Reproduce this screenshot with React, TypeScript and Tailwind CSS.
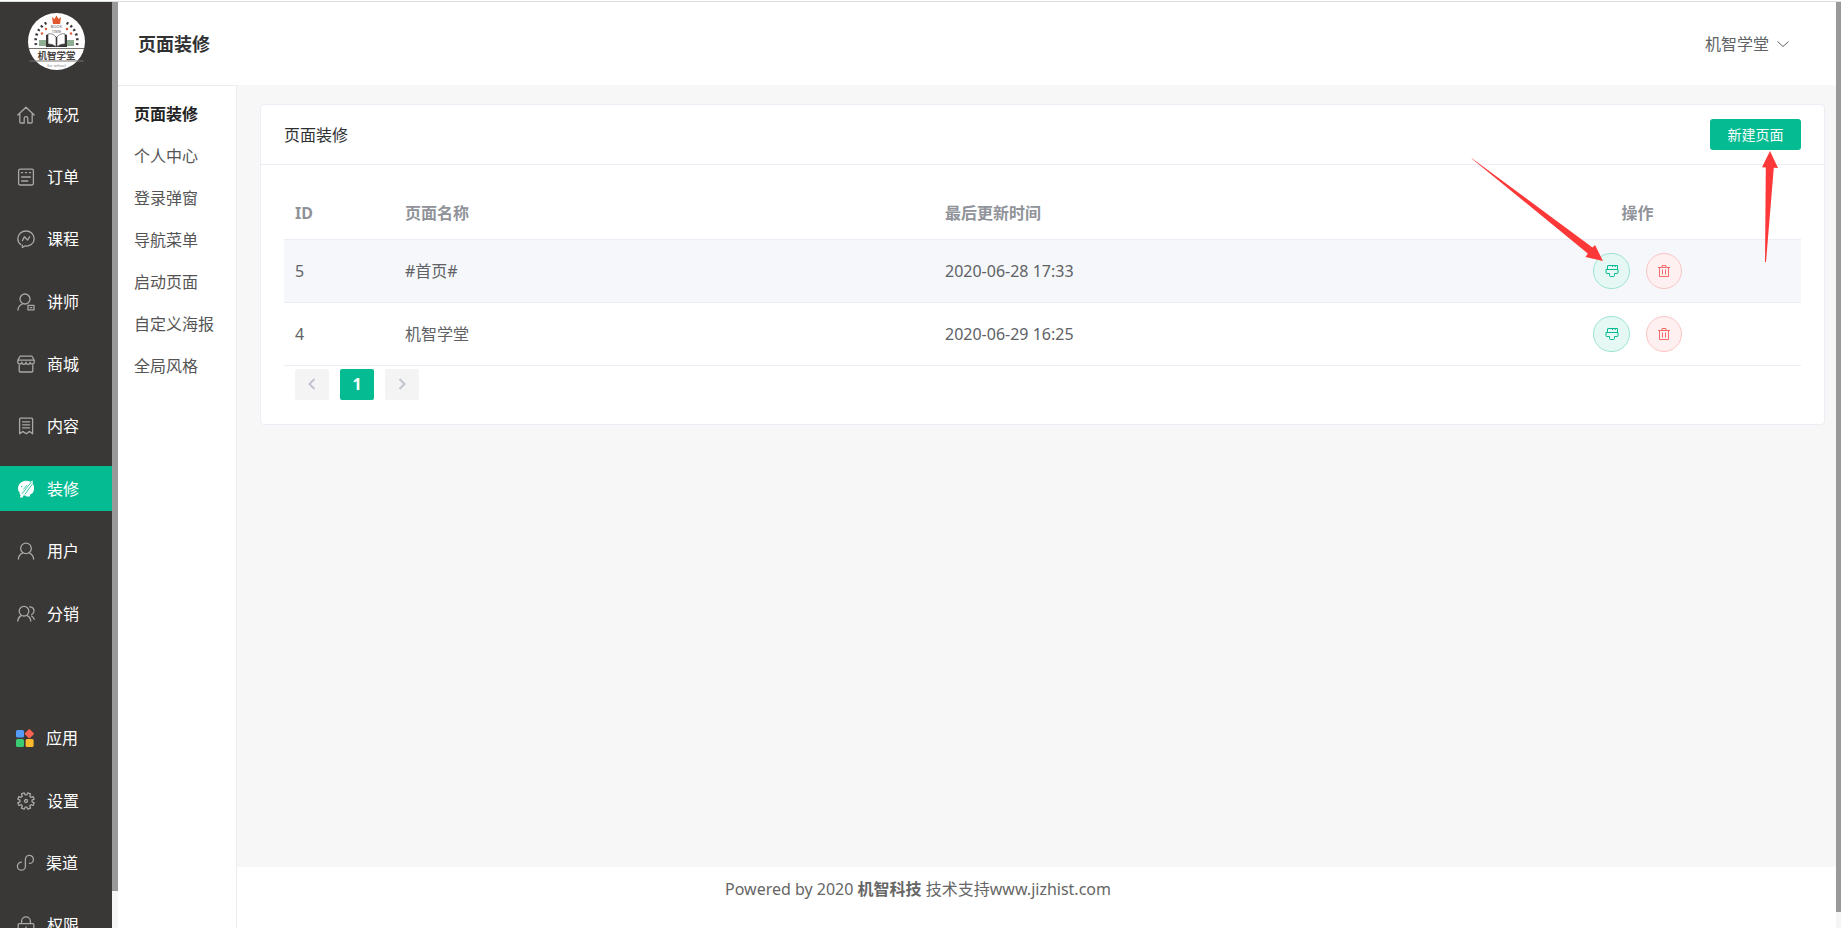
import { type ReactNode } from "react";
import clsx from "clsx";

interface MenuItem {
  label: string;
  icon: ReactNode;
  active?: boolean;
  tight?: boolean;
}

interface PageRow {
  id: number;
  name: string;
  updatedAt: string;
}

const LineIcon = ({ children }: { children: ReactNode }) => (
  <svg
    viewBox="0 0 18 18"
    className="size-[18px] shrink-0"
    fill="none"
    stroke="currentColor"
    strokeWidth="1.3"
    strokeLinecap="round"
    strokeLinejoin="round"
    aria-hidden="true"
  >
    {children}
  </svg>
);

// eight teeth, four outline points for each
const GEAR_POINTS = Array.from({ length: 8 }, (_, tooth) =>
  [
    [-15, 6.1],
    [-10, 8.4],
    [10, 8.4],
    [15, 6.1],
  ].map(([offset, radius]) => {
    const angle = ((22.5 + tooth * 45 + offset) * Math.PI) / 180;
    return `${(9 + radius * Math.cos(angle)).toFixed(2)},${(9 + radius * Math.sin(angle)).toFixed(2)}`;
  }),
)
  .flat()
  .join(" ");

const MENU: (MenuItem | null)[] = [
  {
    label: "概况",
    icon: (
      <LineIcon>
        <path d="M.8 9 9 1.2 17.2 9M2.8 7.5V16a1 1 0 0 0 1 1h3.4v-4.6a1.8 1.8 0 0 1 3.6 0V17h3.4a1 1 0 0 0 1-1V7.5" />
      </LineIcon>
    ),
  },
  {
    label: "订单",
    icon: (
      <LineIcon>
        <rect x="1.6" y="1.2" width="14.8" height="15.8" rx="1.4" />
        <path d="M4.4 4.6h1.200M8.400 4.600h1.200M12.400 4.600h1.200M4.600 9h8.800M4.600 13h6.200" />
      </LineIcon>
    ),
  },
  {
    label: "课程",
    icon: (
      <LineIcon>
        <path d="M5.4 15.2v2.2l2.500-1.400c5.200.6 9.300-2.800 9.300-7.200C17.200 4.400 13.600 1 9 1S.8 4.400.8 8.600c0 2.500 1.200 4.700 3 6" />
        <path d="M5.400 10.600 7.400 6.800l3.200 3.200 2-3.200" />
      </LineIcon>
    ),
  },
  {
    label: "讲师",
    icon: (
      <LineIcon>
        <circle cx="8" cy="6" r="5" />
        <path d="M1 17c.2-3 1.800-5 4.400-6" />
        <rect x="11" y="12.400" width="6" height="4.400" />
        <path d="M13.300 14.600h1.400" />
      </LineIcon>
    ),
  },
  {
    label: "商城",
    icon: (
      <LineIcon>
        <path d="M3 1.200h12l2.200 4v1.600a2 2 0 0 1-4 .4 2.100 2.100 0 0 1-4.200 0 2.100 2.100 0 0 1-4.200 0 2 2 0 0 1-4-.4V5.200zM1 5.200h16M2.200 10.400V16a1 1 0 0 0 1 1h11.600a1 1 0 0 0 1-1v-5.600" />
      </LineIcon>
    ),
  },
  {
    label: "内容",
    icon: (
      <LineIcon>
        <path d="M2.600 16.800V2.200q0-1 1-1h11q1 0 1 1v14.600l-3-2.400-3.400 2.400-3.400-2.400zM5.600 4.800h7M5.600 7.800h7M5.600 10.800h7" />
      </LineIcon>
    ),
  },
  {
    label: "装修",
    active: true,
    icon: (
      <svg viewBox="0 0 18 18" className="size-[18px] shrink-0" aria-hidden="true">
        <path
          d="M13.500 1.800 15.800.6l-.2 2.600c1.800 2.300 2.100 6.400.4 9.200-.8 1.200-1.900 1.400-2.600 1.800l-.6 2.300H9.400l-1-1.100-2 .2-.6 1.900H2.900l.7-2.600C2.200 14.200 2.700 13.500 2.700 12.600 0 9.800.6 5 4 2.400 6.800.4 10.600.3 13.500 1.800z"
          fill="white"
        />
        <path
          d="M14.200 2.200 5.200 13.600M15.200 4.200 8.200 14M9.800 5.400 6.600 9.200"
          stroke="#05bb91"
          strokeWidth=".8"
          strokeLinecap="round"
        />
        <circle cx="4.600" cy="6.600" r=".6" fill="#05bb91" />
      </svg>
    ),
  },
  {
    label: "用户",
    icon: (
      <LineIcon>
        <circle cx="9" cy="6.400" r="5.300" />
        <path d="M1.400 17c.2-2.900 1.800-5 4.300-6.200M16.600 17c-.2-2.900-1.800-5-4.300-6.200" />
      </LineIcon>
    ),
  },
  {
    label: "分销",
    icon: (
      <LineIcon>
        <circle cx="7" cy="6.200" r="4.800" />
        <path d="M.8 16c.2-2.600 1.400-4.400 3.400-5.400M13.800 16c-.2-2.600-1.600-4.400-3.800-5.400M12.600 1.800c2.600 0 4.400 1.800 4.400 4.200 0 1.800-1 3-2.400 3.800M14.800 11.200c1.300.7 2.100 1.700 2.400 3.200" />
      </LineIcon>
    ),
  },
  null,
  {
    label: "应用",
    tight: true,
    icon: (
      <svg viewBox="0 0 18 18" className="size-[18px] shrink-0" aria-hidden="true">
        <rect y="1" width="8" height="7.500" rx="1.500" fill="#559cf8" />
        <rect x="9.800" y="1.200" width="7" height="7" rx="1" fill="#fb6251" transform="rotate(45 13.300 4.700)" />
        <rect y="10" width="8" height="8" rx="1.500" fill="#3bcb73" />
        <rect x="9.600" y="10" width="8" height="8" rx="1.500" fill="#fbbb2c" />
      </svg>
    ),
  },
  {
    label: "设置",
    icon: (
      <LineIcon>
        <polygon points={GEAR_POINTS} />
        <circle cx="9" cy="9" r="1.500" />
      </LineIcon>
    ),
  },
  {
    label: "渠道",
    tight: true,
    icon: (
      <LineIcon>
        <path d="M5.400 8.200a4 4 0 1 0 4 4V5.400a4 4 0 1 1 4 4" />
      </LineIcon>
    ),
  },
  {
    label: "权限",
    icon: (
      <LineIcon>
        <rect x="1.200" y="7.600" width="15.600" height="9.800" rx="1" />
        <path d="M4.600 7.400V5.200a4.400 4.400 0 0 1 8.800 0v2.200M9 11v2.600" />
      </LineIcon>
    ),
  },
];

const SUB_MENU = ["页面装修", "个人中心", "登录弹窗", "导航菜单", "启动页面", "自定义海报", "全局风格"];

const ROWS: PageRow[] = [
  { id: 5, name: "#首页#", updatedAt: "2020-06-28 17:33" },
  { id: 4, name: "机智学堂", updatedAt: "2020-06-29 16:25" },
];

function Logo() {
  return (
    <svg viewBox="0 0 57 57" className="mx-auto size-[57px] shrink-0" role="img" aria-label="机智学堂">
      <circle cx="28.500" cy="28.500" r="28.500" fill="#fff" />
      <path
        d="M8 32A21 21 0 0 1 20 9M49 32A21 21 0 0 0 37 9"
        fill="none"
        stroke="#3a3836"
        strokeWidth="2.600"
        strokeDasharray="2 2.800"
      />
      <path d="m24 4 2.500 2 2-3.500L30.500 6 33 4l-1 7h-7z" fill="#e0592f" />
      <g fill="#e0592f">
        <circle cx="18" cy="16" r="1.200" />
        <circle cx="14" cy="20.500" r="1.200" />
        <circle cx="39" cy="16" r="1.200" />
        <circle cx="43" cy="20.500" r="1.200" />
      </g>
      <g fill="#666" fontSize="4" textAnchor="middle">
        <text x="28.500" y="15">BOOK</text>
        <text x="28.500" y="20">TIME</text>
      </g>
      <path d="M11 27h7v6h-7zM39 27h7v6h-7z" fill="#8fae94" />
      <path d="M18 22c4-1 7 0 10.500 2 3.500-2 6.500-3 10.500-2v12H18z" fill="#3a3836" />
      <path
        d="M20 21c4-1 6 1 8 3v10c-2-2-4-3-8-3zM37 21c-4-1-6 1-8 3v10c2-2 4-3 8-3z"
        fill="#fff"
        stroke="#3a3836"
        strokeWidth=".6"
      />
      <path d="M1 35.500h55M1.500 48h54" stroke="#77706c" strokeWidth="1" />
      <text x="28.500" y="45.500" fontSize="9.500" fontWeight="700" textAnchor="middle" fill="#4a4542">
        机智学堂
      </text>
      <text x="28.500" y="54" fontSize="4" textAnchor="middle" fill="#777">
        for school
      </text>
    </svg>
  );
}

function Sidebar() {
  return (
    <aside className="flex w-28 shrink-0 flex-col overflow-hidden bg-[#3a3836] pt-[11px]">
      <Logo />
      <ul className="mt-[22px] flex h-[856px] shrink-0 flex-col justify-between">
        {MENU.map((item, index) => (
          <li key={item?.label ?? index} className="h-[45px]">
            {item && (
              <a
                href="#"
                className={clsx(
                  "flex h-full items-center gap-3 text-base text-white",
                  item.tight ? "pl-4" : "pl-[17px]",
                  item.active && "bg-[#05bb91]",
                )}
              >
                <span className="text-[#a9a8a7]">{item.icon}</span>
                {item.label}
              </a>
            )}
          </li>
        ))}
      </ul>
    </aside>
  );
}

function BrushIcon() {
  return (
    <svg viewBox="0 0 14 14" className="size-3.5" fill="none" stroke="currentColor" aria-hidden="true">
      <path d="M2.500 5.500V2q0-.5.500-.5h9.500v4M1 5.500h12v3q0 1-1 1H9.500v2q0 1-1 1h-3q-1 0-1-1v-2H2q-1 0-1-1zM7.500 1.500v1.500M10.200 1.500v1.500" />
    </svg>
  );
}

function TrashIcon() {
  return (
    <svg viewBox="0 0 14 14" className="size-3.5" fill="none" stroke="currentColor" aria-hidden="true">
      <path d="M1 3.500h12M2.500 3.500v9h9v-9M5 3.300V1.500h4v1.800M5.500 5.500v5M8.500 5.500v5" />
    </svg>
  );
}

function PageTable() {
  return (
    <table className="w-full table-fixed border-collapse text-left text-base text-[#606266]">
      <colgroup>
        <col className="w-[110px]" />
        <col />
        <col />
        <col className="w-[327px]" />
      </colgroup>
      <thead>
        <tr className="h-[52px] border-b border-[#ebeef5] text-[#909399]">
          <th className="pl-[11px]">ID</th>
          <th className="pl-[11px]">页面名称</th>
          <th className="pl-[11px]">最后更新时间</th>
          <th className="text-center">操作</th>
        </tr>
      </thead>
      <tbody>
        {ROWS.map((row) => (
          <tr key={row.id} className="h-[63px] border-b border-[#ebeef5] first:bg-[#f5f7fa]">
            <td className="pl-[11px]">{row.id}</td>
            <td className="pl-[11px]">{row.name}</td>
            <td className="pl-[11px]">{row.updatedAt}</td>
            <td>
              <div className="flex justify-center gap-4">
                <button
                  type="button"
                  aria-label="装修"
                  className="flex h-9 w-[37px] items-center justify-center rounded-full border border-[#9be4d3] bg-[#e6f8f4] text-[#05bb91]"
                >
                  <BrushIcon />
                </button>
                <button
                  type="button"
                  aria-label="删除"
                  className="flex size-9 items-center justify-center rounded-full border border-[#fbc4c4] bg-[#fef0f0] text-[#f56c6c]"
                >
                  <TrashIcon />
                </button>
              </div>
            </td>
          </tr>
        ))}
      </tbody>
    </table>
  );
}

function Pagination() {
  const base = "flex h-[31px] w-[34px] items-center justify-center rounded-xs";
  const arrow = "size-4 fill-none stroke-[#c0c4cc] stroke-2";

  return (
    <nav className="mt-[3px] flex gap-[11px] pl-[11px]" aria-label="分页">
      <button type="button" disabled aria-label="上一页" className={clsx(base, "bg-[#f4f4f5]")}>
        <svg viewBox="0 0 16 16" className={arrow}>
          <path d="M10.500 3 5.500 8l5 5" />
        </svg>
      </button>
      <button type="button" className={clsx(base, "bg-[#05bb91] text-base font-bold text-white")}>
        1
      </button>
      <button type="button" disabled aria-label="下一页" className={clsx(base, "bg-[#f4f4f5]")}>
        <svg viewBox="0 0 16 16" className={arrow}>
          <path d="m5.500 3 5 5-5 5" />
        </svg>
      </button>
    </nav>
  );
}

// red pointers to the edit button and the "new page" button
function GuideArrows() {
  return (
    <svg
      viewBox="0 0 310 116"
      className="pointer-events-none absolute top-[45px] right-[44px] h-[116px] w-[310px]"
      fill="#fc3838"
      aria-hidden="true"
    >
      <path d="M2.500 9 1.500 8 122.500 97.500 125 95l8 16-17.500-4 2.300-3.500L1 8z" />
      <path d="M300 1l8 17-4.200-.3L296 112h-1l.8-94.500-3.800-.3z" />
    </svg>
  );
}

export default function App() {
  return (
    <div className="flex h-screen flex-col overflow-hidden bg-white pt-px font-['Noto_Sans','Noto_Sans_CJK_SC',sans-serif]">
      <div className="flex min-h-0 flex-1 border-t border-[#dcdfdf]">
        <Sidebar />
        <div className="w-1.5 shrink-0 bg-[#f5f5f5] pb-[37px]">
          <div className="h-full bg-[#999]" />
        </div>

        <div className="flex min-w-0 flex-1 flex-col">
          <header className="flex h-[83px] shrink-0 items-center justify-between pr-[47px] pl-5">
            <h1 className="text-lg font-bold text-[#303133]">页面装修</h1>
            <button type="button" className="flex items-center gap-2 text-base text-[#606266]">
              机智学堂
              <svg viewBox="0 0 12 12" className="size-3" fill="none" stroke="currentColor" aria-hidden="true">
                <path d="m.5 3.500 5.500 5 5.500-5" />
              </svg>
            </button>
          </header>

          <div className="flex min-h-0 flex-1">
            <nav className="w-[119px] shrink-0 border-t border-r border-[#ebebeb] pt-[7px] pl-4">
              {SUB_MENU.map((label, index) => (
                <a
                  key={label}
                  href="#"
                  className={clsx(
                    "flex h-[42px] items-center text-base whitespace-nowrap",
                    index === 0 ? "font-bold text-[#222]" : "text-[#555]",
                  )}
                >
                  {label}
                </a>
              ))}
            </nav>

            <div className="flex min-w-0 flex-1 flex-col">
              <main className="flex-1 bg-[#f7f7f7] pt-[19px] pr-[11px] pl-[23px]">
                <section className="relative rounded border border-[#ebeef5] bg-white">
                  <div className="flex h-[60px] items-center justify-between border-b border-[#ebeef5] px-[23px]">
                    <h2 className="text-base text-[#303133]">页面装修</h2>
                    <button type="button" className="h-[31px] w-[91px] rounded-[3px] bg-[#05bb91] text-sm text-white">
                      新建页面
                    </button>
                  </div>
                  <div className="px-[23px] pt-[22px] pb-6">
                    <PageTable />
                    <Pagination />
                  </div>
                  <GuideArrows />
                </section>
              </main>

              <footer className="h-[61px] shrink-0 bg-white pt-2.5 pr-[237px] text-center text-base leading-6 text-[#666]">
                Powered by 2020 <b>机智科技</b> 技术支持www.jizhist.com
              </footer>
            </div>
          </div>
        </div>

        <div className="w-[5px] shrink-0 bg-[#f5f5f5] pb-4">
          <div className="h-full bg-[#999]" />
        </div>
      </div>
    </div>
  );
}
